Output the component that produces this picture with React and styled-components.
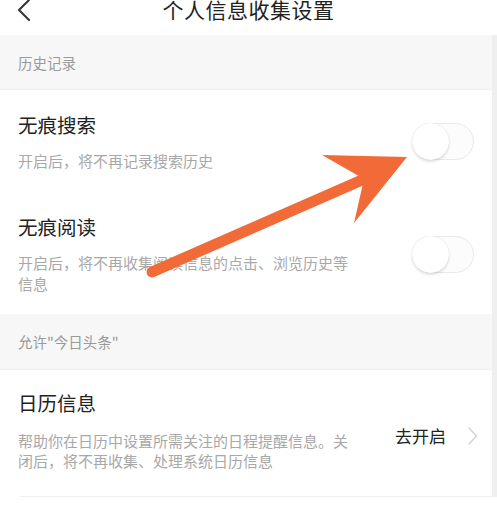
import React from 'react';
import styled, { createGlobalStyle } from 'styled-components';

const GlobalStyle = createGlobalStyle`
  html, body {
    margin: 0;
    padding: 0;
    background: #fff;
    font-family: "Noto Sans CJK SC", "Noto Sans", sans-serif;
  }
  * { box-sizing: border-box; }
`;

const Page = styled.div`
  position: relative;
  width: 497px;
  height: 507px;
  overflow: hidden;
  background: #fff;
`;

const Header = styled.div`
  height: 53px;
  margin-top: -18px;
  display: flex;
  align-items: center;
  justify-content: center;
  position: relative;
`;

const BackButton = styled.button`
  position: absolute;
  left: 14px;
  top: 16px;
  width: 22px;
  height: 24px;
  border: none;
  background: none;
  padding: 0;
  color: #333;
  svg { width: 100%; height: 100%; }
`;

const Title = styled.h1`
  margin: 0;
  font-size: 21px;
  font-weight: 400;
  letter-spacing: 0.5px;
  color: #222;
  line-height: 28px;
`;

const Content = styled.div`
  border-right: 5px solid #efefef;
`;

const SectionHeader = styled.div`
  height: ${(p) => p.$h}px;
  background: #f7f7f7;
  display: flex;
  align-items: center;
  padding-left: 18px;
  font-size: 14.5px;
  color: #9a9a9a;
  border-bottom: 1px solid #efefef;
`;

const Row = styled.div`
  display: flex;
  align-items: center;
  justify-content: space-between;
  padding: ${(p) => p.$pad};
  padding-left: 18px;
  padding-right: 18px;
`;

const TextBlock = styled.div`
  display: flex;
  flex-direction: column;
  width: 336px;
`;

const RowTitle = styled.div`
  font-size: 19.5px;
  line-height: 26px;
  color: #222;
`;

const RowDesc = styled.div`
  margin-top: ${(p) => p.$gap || 12}px;
  font-size: 15px;
  line-height: ${(p) => p.$lh || 21}px;
  color: #a8a8a8;
`;

const Toggle = styled.div`
  position: relative;
  width: 62px;
  height: 37px;
  border-radius: 19px;
  border: 1px solid #e9e9e9;
  background: #fcfcfc;
  flex-shrink: 0;

  &::after {
    content: '';
    position: absolute;
    left: -1px;
    top: -1px;
    width: 37px;
    height: 37px;
    border-radius: 50%;
    background: #fff;
    box-shadow: 0 2px 3px rgba(0, 0, 0, 0.12), 0 0 1px rgba(0, 0, 0, 0.15);
  }
`;

const Action = styled.div`
  display: flex;
  align-items: center;
  gap: 21px;
  margin-top: 10px;
  margin-right: -4px;
  font-size: 17px;
  color: #222;
  flex-shrink: 0;

  svg { width: 11px; height: 20px; }
`;

const Divider = styled.div`
  height: 1px;
  background: #eeeeee;
  margin-left: 20px;
`;

const Arrow = styled.svg`
  position: absolute;
  left: 0;
  top: 0;
  pointer-events: none;
`;

export default function App() {
  return (
    <>
      <GlobalStyle />
      <Page>
        <Header>
          <BackButton>
            <svg viewBox="0 0 22 24" fill="none" stroke="currentColor" strokeWidth="2" strokeLinecap="round" strokeLinejoin="round">
              <path d="M15 2 L5 12 L15 22" />
            </svg>
          </BackButton>
          <Title>个人信息收集设置</Title>
        </Header>
        <Content>
          <SectionHeader $h={55}>历史记录</SectionHeader>
          <Row $pad="22px 0 21px">
            <TextBlock>
              <RowTitle>无痕搜索</RowTitle>
              <RowDesc>开启后，将不再记录搜索历史</RowDesc>
            </TextBlock>
            <Toggle />
          </Row>
          <Row $pad="22px 0 20px">
            <TextBlock>
              <RowTitle>无痕阅读</RowTitle>
              <RowDesc $lh={21}>开启后，将不再收集阅读信息的点击、浏览历史等信息</RowDesc>
            </TextBlock>
            <Toggle />
          </Row>
          <SectionHeader $h={56}>允许"今日头条"</SectionHeader>
          <Row $pad="20px 0 25px">
            <TextBlock>
              <RowTitle>日历信息</RowTitle>
              <RowDesc $gap={15} $lh={20}>帮助你在日历中设置所需关注的日程提醒信息。关闭后，将不再收集、处理系统日历信息</RowDesc>
            </TextBlock>
            <Action>
              去开启
              <svg viewBox="0 0 11 20" fill="none" stroke="#d2d2d2" strokeWidth="1.4" strokeLinecap="round" strokeLinejoin="round">
                <path d="M2 2 L9.5 10 L2 18" />
              </svg>
            </Action>
          </Row>
        </Content>
        <Divider />
        <Arrow width="497" height="507" viewBox="0 0 497 507">
          <line x1="152" y1="272" x2="362" y2="180" stroke="#f26a37" strokeWidth="11" strokeLinecap="round" />
          <polygon points="322,155 407,157 354,223 364,179" fill="#f26a37" />
        </Arrow>
      </Page>
    </>
  );
}
